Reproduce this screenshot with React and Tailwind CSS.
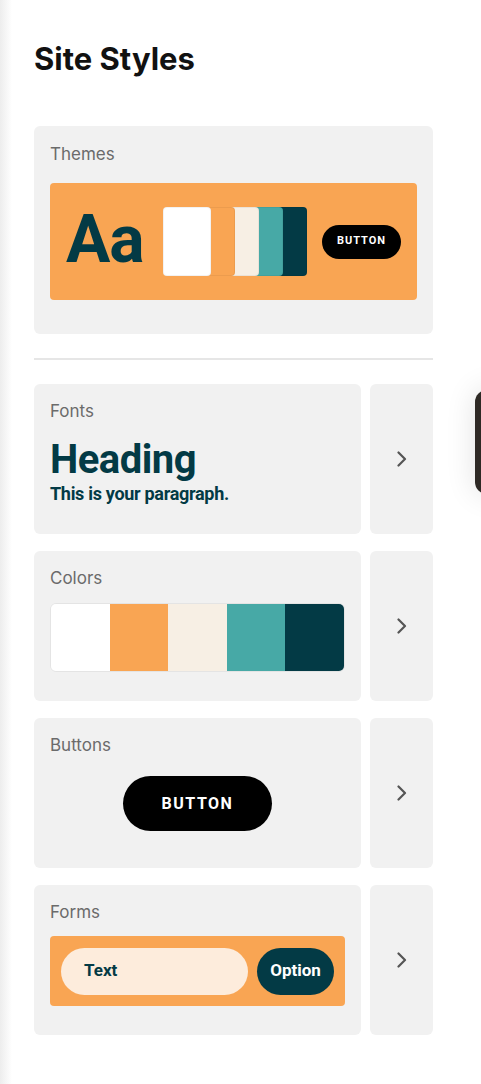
import React from "react";

const ui = { fontFamily: "Inter, 'Noto Sans', sans-serif" };
const roboto = { fontFamily: "Roboto, 'Liberation Sans', sans-serif" };

const PALETTE = ["#ffffff", "#f9a553", "#f7efe4", "#47a9a6", "#033a45"];

const Chevron = () => (
  <svg width="12" height="16" viewBox="0 0 12 16" fill="none">
    <path d="M2.5 1.5 9 8l-6.5 6.5" stroke="#555555" strokeWidth="2.2" strokeLinecap="round" strokeLinejoin="round" />
  </svg>
);

const Label = ({ children }) => (
  <div className="text-[17px] leading-6 text-[#6b6b6b]" style={ui}>
    {children}
  </div>
);

// card with chevron column on the right
const Row = ({ title, children }) => (
  <div className="flex gap-[9px] h-[150px]">
    <div className="flex-1 rounded-md bg-[#f1f1f1] pt-[15px] px-4">
      <Label>{title}</Label>
      {children}
    </div>
    <div className="w-[63px] rounded-md bg-[#f1f1f1] flex items-center justify-center">
      <Chevron />
    </div>
  </div>
);

export default function App() {
  return (
    <div className="relative min-h-[1084px] bg-white overflow-hidden">
      {/* left edge shade */}
      <div className="absolute left-0 top-0 bottom-0 w-3 bg-gradient-to-r from-[#ededed] to-white" />

      <div className="relative pl-[34px] w-[433px] pt-[41px]">
        <h1 className="text-[31px] leading-9 font-bold text-[#111111]" style={ui}>
          Site Styles
        </h1>

        {/* Themes */}
        <div className="mt-[49px] rounded-md bg-[#f1f1f1] pt-4 px-4 h-[208px]">
          <Label>Themes</Label>
          <div className="mt-[17px] h-[117px] rounded bg-[#f9a553] flex items-center px-4">
            <span
              className="text-[66px] leading-none font-bold text-[#033a45] tracking-[-1px] -mt-1"
              style={roboto}
            >
              Aa
            </span>
            <div className="ml-[19px] flex">
              {PALETTE.map((c, i) => (
                <div
                  key={c}
                  className={
                    "w-[48px] h-[69px] rounded border border-black/5 " +
                    (i === 0 ? "z-50" : i === 1 ? "-ml-[24px] z-40" : i === 2 ? "-ml-[24px] z-30" : i === 3 ? "-ml-[24px] z-20" : "-ml-[24px] z-10")
                  }
                  style={{ backgroundColor: c }}
                />
              ))}
            </div>
            <div
              className="ml-auto w-[79px] h-[34px] rounded-full bg-black text-white text-[11px] font-bold tracking-[1px] flex items-center justify-center"
              style={roboto}
            >
              BUTTON
            </div>
          </div>
        </div>

        <div className="mt-[24px] h-[2px] bg-[#e6e6e6]" />

        <div className="mt-[24px] flex flex-col gap-[17px]">
          <Row title="Fonts">
            <div className="mt-[15px] text-[40px] leading-[44px] font-bold text-[#033a45] tracking-[-0.5px]" style={roboto}>
              Heading
            </div>
            <div className="text-[18px] leading-[24px] font-bold text-[#033a45] tracking-[-0.3px]" style={roboto}>
              This is your paragraph.
            </div>
          </Row>

          <Row title="Colors">
            <div className="mt-[13px] h-[69px] flex rounded-md overflow-hidden border border-black/5">
              {PALETTE.map((c) => (
                <div key={c} className="flex-1" style={{ backgroundColor: c }} />
              ))}
            </div>
          </Row>

          <Row title="Buttons">
            <div className="mt-[19px] flex justify-center">
              <div
                className="w-[149px] h-[55px] rounded-full bg-black text-white text-[16px] font-bold tracking-[1.5px] flex items-center justify-center"
                style={roboto}
              >
                BUTTON
              </div>
            </div>
          </Row>

          <Row title="Forms">
            <div className="mt-[12px] h-[70px] rounded bg-[#f9a553] flex items-center gap-[9px] px-[11px]">
              <div
                className="w-[187px] h-[47px] rounded-full bg-[#fdecdc] pl-[23px] flex items-center text-[17px] font-bold text-[#033a45]"
                style={roboto}
              >
                Text
              </div>
              <div
                className="flex-1 h-[47px] rounded-full bg-[#033a45] flex items-center justify-center text-[17px] font-bold text-white"
                style={roboto}
              >
                Option
              </div>
            </div>
          </Row>
        </div>
      </div>

      {/* panel peeking in at the right edge */}
      <div className="absolute left-[475px] top-[390px] w-[60px] h-[104px] rounded-l-xl bg-[#2e2925] shadow-[0_0_30px_rgba(0,0,0,0.12)]" />
    </div>
  );
}
